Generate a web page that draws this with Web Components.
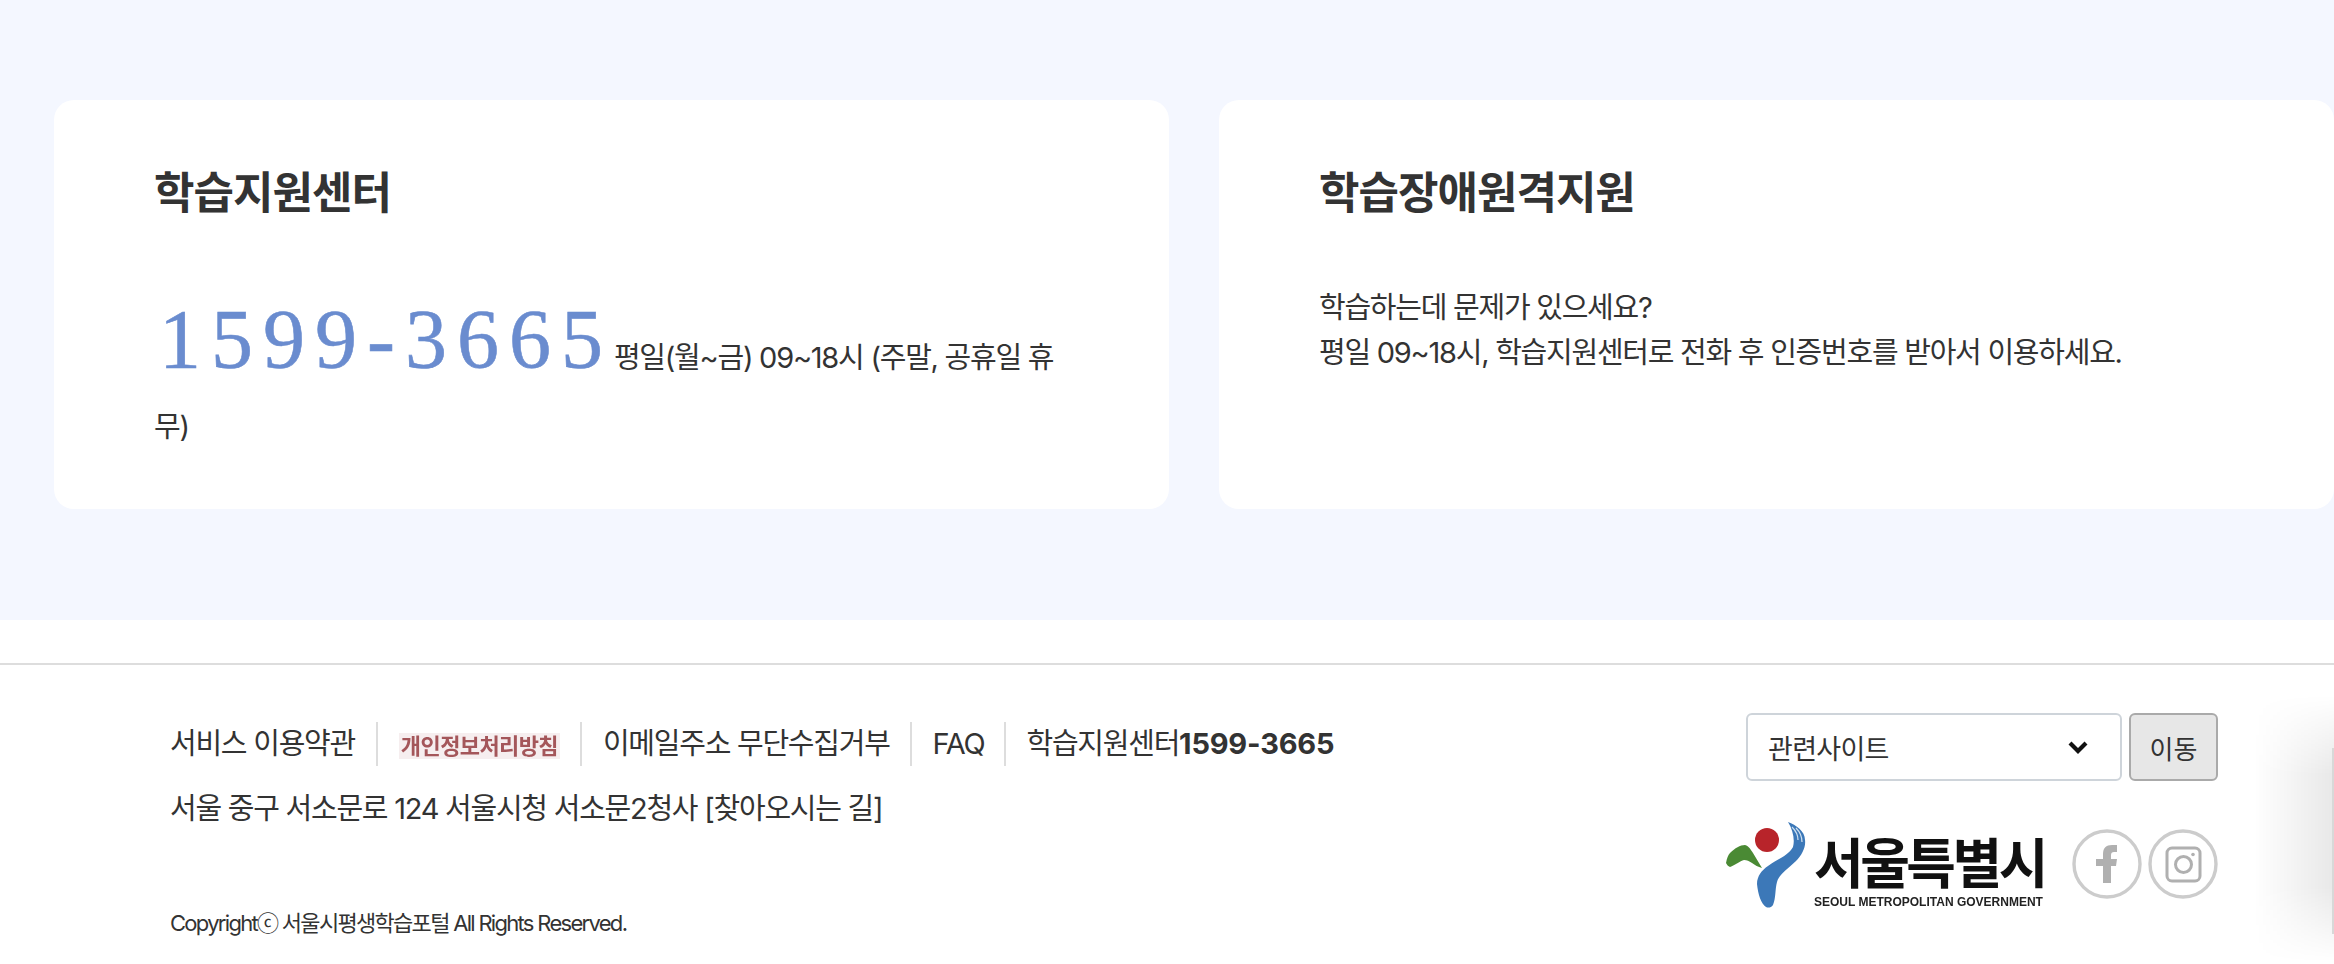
<!DOCTYPE html>
<html lang="ko">
<head>
<meta charset="utf-8">
<title>서울시평생학습포털</title>
<style>
  html, body { margin: 0; padding: 0; }
  body {
    width: 2334px;
    height: 964px;
    overflow: hidden;
    background: #fff;
    color: #333;
    font-family: Inter, "Noto Sans CJK KR", "Noto Sans", sans-serif;
  }
  .phone-line { line-height: 64px; }
</style>
</head>
<body>
<support-section>
  <info-card heading="학습지원센터">
    <span class="phone-line"><phone-number>1599-3665</phone-number> 평일(월~금) 09~18시 (주말, 공휴일 휴무)</span>
  </info-card>
  <info-card heading="학습장애원격지원">
    학습하는데 문제가 있으세요?<br>
    평일 09~18시, 학습지원센터로 전화 후 인증번호를 받아서 이용하세요.
  </info-card>
</support-section>
<site-footer></site-footer>

<script>
class SupportSection extends HTMLElement {
  constructor() {
    super();
    this.attachShadow({ mode: 'open' }).innerHTML = `
      <style>
        :host {
          display: grid;
          grid-template-columns: 1115px 1115px;
          column-gap: 50px;
          height: 620px;
          box-sizing: border-box;
          padding: 100px 0 111px 54px;
          background: #f4f7ff;
        }
      </style>
      <slot></slot>`;
  }
}

class InfoCard extends HTMLElement {
  constructor() {
    super();
    this.attachShadow({ mode: 'open' }).innerHTML = `
      <style>
        :host {
          display: block;
          box-sizing: border-box;
          padding: 61px 100px 0;
          background: #fff;
          border-radius: 20px;
          word-break: break-all;
        }
        h2 {
          margin: 0 0 60px;
          font-size: 44px;
          line-height: 64px;
          font-weight: 700;
          letter-spacing: -1px;
          color: #333;
        }
        .body {
          font-size: 29px;
          line-height: 45px;
          letter-spacing: -1.25px;
          color: #333;
        }
      </style>
      <h2></h2>
      <div class="body"><slot></slot></div>`;
  }

  connectedCallback() {
    this.shadowRoot.querySelector('h2').textContent = this.getAttribute('heading');
  }
}

class PhoneNumber extends HTMLElement {
  constructor() {
    super();
    this.attachShadow({ mode: 'open' }).innerHTML = `
      <style>
        :host {
          display: inline;
          font-family: "Liberation Serif", serif;
          font-size: 84px;
          line-height: 110px;
          letter-spacing: 10px;
          margin: 0 -6px 0 5px;
          color: #6a8ccf;
          -webkit-text-stroke: .6px #6a8ccf;
        }
      </style>
      <slot></slot>`;
  }
}

class SiteFooter extends HTMLElement {
  constructor() {
    super();
    this.attachShadow({ mode: 'open' }).innerHTML = `
      <style>
        :host {
          display: block;
          position: relative;
          height: 301px;
          box-sizing: border-box;
          margin-top: 43px;
          border-top: 2px solid #ddd;
          padding: 57px 116px 0 170px;
          font-size: 29px;
          letter-spacing: -1.25px;
          color: #333;
        }
        .wrap { display: flex; justify-content: space-between; }
        .links { display: flex; align-items: center; height: 44px; }
        .links a { padding: 0 21px; border-left: 2px solid #ddd; line-height: 44px; white-space: nowrap; }
        .links a:first-child { padding-left: 0; border-left: 0; }
        .links a:nth-child(2) { padding-right: 20px; }
        .links a:nth-child(3) { padding-right: 20px; }
        .links a:nth-child(4) { padding-right: 19px; }
        .links b { letter-spacing: -0.2px; }
        .policy {
          display: inline-block;
          width: 161px;
          height: 26px;
          line-height: 26px;
          text-align: center;
          font-size: 22px;
          font-weight: 700;
          letter-spacing: -0.6px;
          color: #a4565a;
          background: #f6eeef;
          vertical-align: middle;
          filter: blur(.6px);
        }
        .address { margin-top: 21px; line-height: 44px; }
        .copy { margin-top: 75px; font-size: 22px; line-height: 30px; letter-spacing: -1.7px; }
        .copy span { font-family: "Noto Sans CJK KR", sans-serif; }
        .side { display: flex; flex-direction: column; align-items: flex-end; margin-top: -9px; }
        .jump { display: flex; gap: 7px; }
        .brand { display: flex; align-items: flex-start; margin-top: 41px; }
        .shade {
          position: absolute;
          right: 0;
          top: 30px;
          width: 80px;
          height: 267px;
          background: linear-gradient(to right, rgba(0,0,0,0), rgba(0,0,0,.09));
          -webkit-mask-image: linear-gradient(to bottom, transparent, #000 30%, #000 72%, transparent);
          mask-image: linear-gradient(to bottom, transparent, #000 30%, #000 72%, transparent);
        }
        .edge {
          position: absolute;
          right: 0;
          top: 83px;
          width: 2px;
          height: 186px;
          background: #d8d8d8;
        }
      </style>
      <div class="wrap">
        <div>
          <div class="links">
            <a>서비스 이용약관</a>
            <a><span class="policy">개인정보처리방침</span></a>
            <a>이메일주소 무단수집거부</a>
            <a>FAQ</a>
            <a>학습지원센터<b>1599-3665</b></a>
          </div>
          <div class="address">서울 중구 서소문로 124 서울시청 서소문2청사 [찾아오시는 길]</div>
          <div class="copy">Copyright<span>ⓒ</span> 서울시평생학습포털 All Rights Reserved.</div>
        </div>
        <div class="side">
          <div class="jump">
            <site-select>관련사이트</site-select>
            <go-button>이동</go-button>
          </div>
          <div class="brand">
            <seoul-logo></seoul-logo>
            <social-icon kind="facebook" style="margin:7px 0 0 30px"></social-icon>
            <social-icon kind="instagram" style="margin:7px 0 0 6px"></social-icon>
          </div>
        </div>
      </div>
      <div class="shade"></div>
      <div class="edge"></div>`;
  }
}

class SiteSelect extends HTMLElement {
  constructor() {
    super();
    this.attachShadow({ mode: 'open' }).innerHTML = `
      <style>
        :host {
          display: flex;
          align-items: center;
          justify-content: space-between;
          box-sizing: border-box;
          width: 376px;
          height: 68px;
          padding: 0 32px 0 20px;
          background: #fff;
          border: 2px solid #ced4da;
          border-radius: 6px;
          font-size: 27px;
          letter-spacing: -0.7px;
          color: #333;
        }
        svg { display: block; }
      </style>
      <slot></slot>
      <svg width="20" height="14" viewBox="0 0 20 14"><path d="M2 3l8 8 8-8" fill="none" stroke="#111" stroke-width="4.2"/></svg>`;
  }
}

class GoButton extends HTMLElement {
  constructor() {
    super();
    this.attachShadow({ mode: 'open' }).innerHTML = `
      <style>
        :host {
          display: flex;
          align-items: center;
          justify-content: center;
          box-sizing: border-box;
          width: 89px;
          height: 68px;
          background: #e7e7e7;
          border: 2px solid #aaa;
          border-radius: 6px;
          font-size: 26px;
          letter-spacing: 0;
          color: #333;
        }
      </style>
      <slot></slot>`;
  }
}

class SeoulLogo extends HTMLElement {
  constructor() {
    super();
    this.attachShadow({ mode: 'open' }).innerHTML = `
      <style>
        :host {
          display: grid;
          grid-template-columns: 88px 228px;
          width: 316px;
          height: 86px;
          filter: blur(.5px);
        }
        svg { display: block; }
        .text { display: flex; flex-direction: column; }
        .ko {
          margin-top: 13px;
          height: 60px;
          font-size: 54px;
          line-height: 60px;
          font-weight: 700;
          letter-spacing: -3.5px;
          white-space: nowrap;
          color: #111;
        }
        .en {
          margin-top: 1px;
          font: 700 12px/12px "Liberation Sans", sans-serif;
          letter-spacing: 0;
          white-space: nowrap;
          color: #222;
        }
      </style>
      <svg width="88" height="86" viewBox="0 0 88 86">
        <circle cx="41" cy="18" r="12" fill="#b8242a"/>
        <path d="M0 41C1 36 2 33 4 31C9 26 14 23 19 23C23 24 25 28 27 31C30 36 33 41 36 46C32 45 29 43 26 41C23 39 21 38 18 38C14 39 9 43 4 45C2 44 1 43 0 41Z" fill="#4a8a34"/>
        <path d="M62 0C70 3 79 9 79 18C80 25 76 33 70 39C62 47 53 52 51 60C49 67 50 76 47 83C45 86 42 86 40 85C35 82 32 72 31 62C31 54 36 48 42 44C52 37 63 33 67 25C69 18 67 8 62 0Z" fill="#3c78b8"/>
        <path d="M66 5C70 9 72 13 72 18M70 6C74 10 76 14 76 20" fill="none" stroke="#cfe0ef" stroke-width="1.2"/>
      </svg>
      <div class="text">
        <div class="ko">서울특별시</div>
        <div class="en">SEOUL METROPOLITAN GOVERNMENT</div>
      </div>`;
  }
}

class SocialIcon extends HTMLElement {
  constructor() {
    super();
    const glyphs = {
      facebook: '<path d="M31 54V37h-7v-7h7v-5c0-6 3-9 9-9h5v7h-3c-2 0-3 1-3 3v4h6l-1 7h-5v17z" fill="#b0b0b0"/>',
      instagram: '<rect x="19" y="19" width="33" height="33" rx="5" fill="none" stroke="#b0b0b0" stroke-width="3"/><circle cx="35.5" cy="35.5" r="8" fill="none" stroke="#b0b0b0" stroke-width="3"/><circle cx="45" cy="25.5" r="1.8" fill="#b0b0b0"/>'
    };
    this.attachShadow({ mode: 'open' }).innerHTML = `
      <style>
        :host { display: block; width: 70px; height: 70px; filter: blur(.6px); }
        svg { display: block; }
      </style>
      <svg width="70" height="70" viewBox="0 0 70 70">
        <circle cx="35" cy="35" r="33" fill="#fff" stroke="#ccc" stroke-width="3.4"/>
        ${glyphs[this.getAttribute('kind')] || ''}
      </svg>`;
  }
}

customElements.define('support-section', SupportSection);
customElements.define('info-card', InfoCard);
customElements.define('phone-number', PhoneNumber);
customElements.define('site-footer', SiteFooter);
customElements.define('site-select', SiteSelect);
customElements.define('go-button', GoButton);
customElements.define('seoul-logo', SeoulLogo);
customElements.define('social-icon', SocialIcon);
</script>
</body>
</html>
